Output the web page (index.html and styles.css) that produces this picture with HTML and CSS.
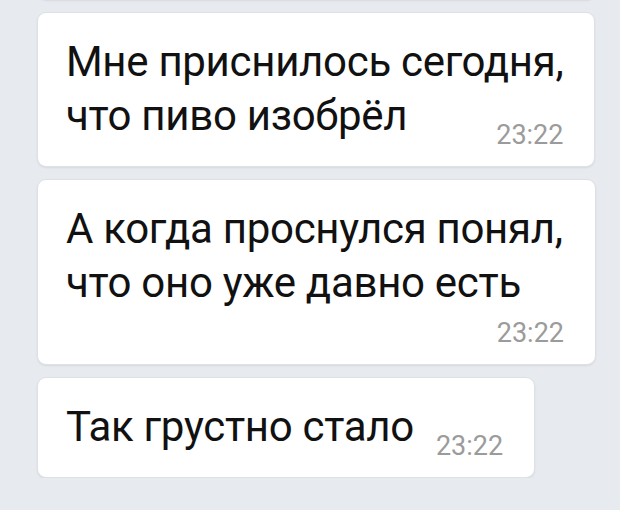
FILE: index.html
```html
<!DOCTYPE html>
<html lang="ru">
<head>
    <meta charset="UTF-8">
    <meta name="viewport" content="width=device-width, initial-scale=1.0">
    <title>Сообщения</title>
    <link rel="stylesheet" href="styles.css">
</head>
<body>

    <div class="chat">
        <!-- Предыдущее сообщение, видно только низ -->
        <div class="bubble bubble-cut"></div>

        <div class="bubble">
            <p class="text">Мне приснилось сегодня,<br>что пиво изобрёл<span class="time">23:22</span></p>
        </div>

        <div class="bubble">
            <p class="text">А когда проснулся понял,<br>что оно уже давно есть<span class="time time-wrapped">23:22</span></p>
        </div>

        <div class="bubble">
            <p class="text">Так грустно стало<span class="time">23:22</span></p>
        </div>
    </div>

</body>
</html>
```

FILE: styles.css
```css
body {
    margin: 0;
    padding: 0;
    background: #e7ebf0;
    font-family: Roboto, 'Liberation Sans', sans-serif;
    overflow: hidden;
}

.chat {
    display: flex;
    flex-direction: column;
    align-items: flex-start;
    gap: 12px;
    padding-left: 37px;
}

.bubble {
    box-sizing: border-box;
    max-width: 559px;
    padding: 22px 31px 16px 28px;
    background: #fff;
    border: 1px solid #dde1e6;
    border-radius: 9px;
    box-shadow: 0 1px 2px rgba(0, 0, 0, 0.08);
}

.bubble-cut {
    width: 559px;
    height: 40px;
    margin-top: -40px;
}

.text {
    display: flow-root;
    margin: 0;
    font-size: 42px;
    line-height: 54px;
    letter-spacing: -0.3px;
    white-space: nowrap;
    color: #111;
}

.time {
    float: right;
    margin: 31px 0 0 22px;
    font-size: 27px;
    line-height: 30px;
    letter-spacing: 0;
    color: #9b9b9b;
}

.time-wrapped {
    margin-top: 8px;
}
```
